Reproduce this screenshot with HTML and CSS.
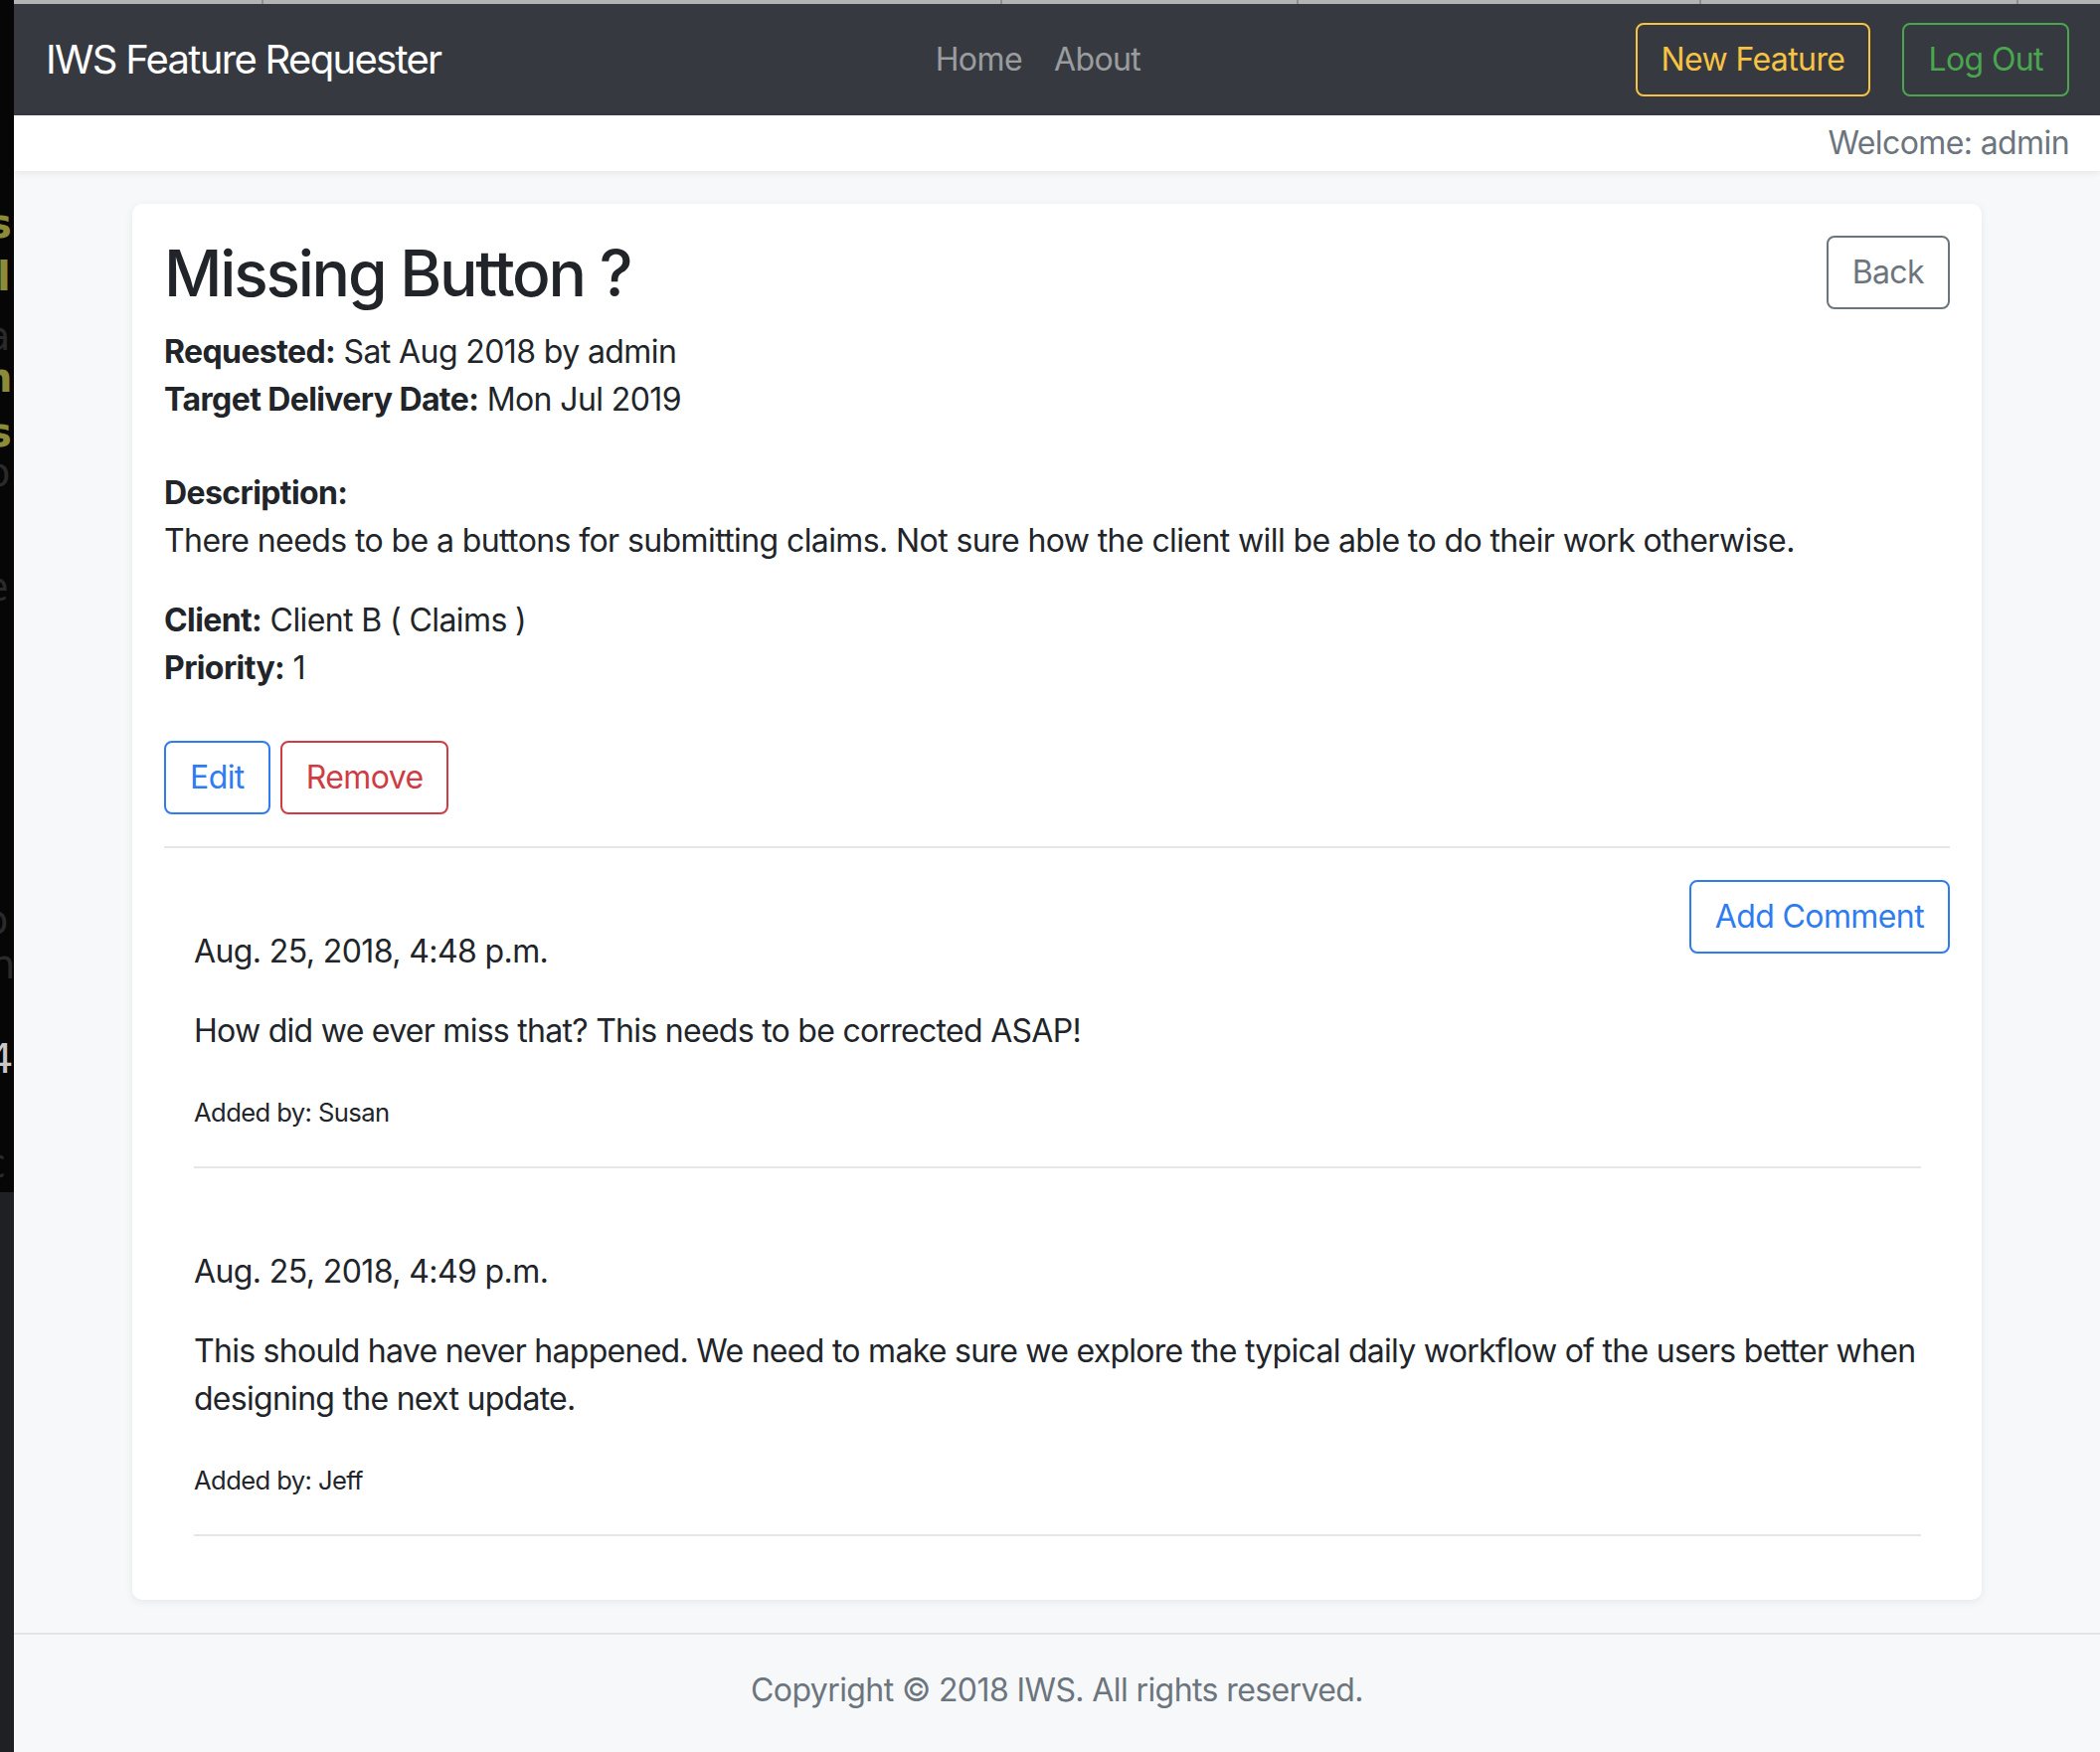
FILE: index.html
```html
<!DOCTYPE html>
<html lang="en">
<head>
<meta charset="utf-8">
<title>IWS Feature Requester</title>
<link rel="stylesheet" href="styles.css">
</head>
<body>
  <div class="side-strip" aria-hidden="true">
    <span class="ghost g1">s</span>
    <span class="ghost g2">l</span>
    <span class="ghost g3">h</span>
    <span class="ghost g4">s</span>
    <span class="ghost dim d1">a</span>
    <span class="ghost dim d2">o</span>
    <span class="ghost dim d3">e</span>
    <span class="ghost dim d4">o</span>
    <span class="ghost dim d5">n</span>
    <span class="ghost light d6">4</span>
    <span class="ghost dim d7">c</span>
  </div>
  <div class="window">
    <div class="tabstrip">
      <span class="tab t1"></span>
      <span class="tab t2"></span>
      <span class="tab t3"></span>
      <span class="tab t4"></span>
      <span class="tab t5"></span>
      <span class="tab t6"></span>
    </div>
    <nav class="navbar">
      <a class="brand" href="#">IWS Feature Requester</a>
      <ul class="nav-links">
        <li><a href="#">Home</a></li>
        <li><a href="#">About</a></li>
      </ul>
      <div class="nav-actions">
        <a class="btn btn-warning" href="#">New Feature</a>
        <a class="btn btn-success" href="#">Log Out</a>
      </div>
    </nav>
    <div class="welcome-bar">Welcome: admin</div>

    <main class="container">
      <section class="card">
        <a class="btn btn-secondary back-btn" href="#">Back</a>
        <h2 class="title">Missing Button ?</h2>
        <p class="meta"><b>Requested:</b> Sat Aug 2018 by admin<br><b>Target Delivery Date:</b> Mon Jul 2019</p>
        <p class="desc"><b>Description:</b><br>There needs to be a buttons for submitting claims. Not sure how the client will be able to do their work otherwise.</p>
        <p class="client"><b>Client:</b> Client B ( Claims )<br><b>Priority:</b> 1</p>
        <div class="actions">
          <a class="btn btn-primary" href="#">Edit</a>
          <a class="btn btn-danger" href="#">Remove</a>
        </div>
        <hr class="divider">
        <a class="btn btn-primary add-comment" href="#">Add Comment</a>
        <div class="comment">
          <p class="comment-date">Aug. 25, 2018, 4:48 p.m.</p>
          <p class="comment-text">How did we ever miss that? This needs to be corrected ASAP!</p>
          <p class="comment-by"><small>Added by: Susan</small></p>
          <hr class="divider">
        </div>
        <div class="comment">
          <p class="comment-date">Aug. 25, 2018, 4:49 p.m.</p>
          <p class="comment-text">This should have never happened. We need to make sure we explore the typical daily workflow of the users better when designing the next update.</p>
          <p class="comment-by"><small>Added by: Jeff</small></p>
          <hr class="divider">
        </div>
      </section>
    </main>

    <footer class="footer">Copyright © 2018 IWS. All rights reserved.</footer>
  </div>
</body>
</html>
```
FILE: styles.css
```css
* { box-sizing: border-box; }

html, body {
  margin: 0;
  padding: 0;
}

body {
  display: flex;
  min-height: 1762px;
  font-family: Inter, "Noto Sans", "Liberation Sans", sans-serif;
  font-size: 32px;
  line-height: 1.5;
  letter-spacing: -0.6px;
  color: #212529;
  background: #f7f8fa;
}

a { text-decoration: none; }

/* ---- left strip (background window peeking out) ---- */
.side-strip {
  position: relative;
  flex: 0 0 14px;
  background: #060606;
  overflow: hidden;
}
.side-strip::after {
  content: "";
  position: absolute;
  left: 0;
  right: 0;
  top: 1199px;
  bottom: 0;
  background: #1f2023;
}
.ghost {
  position: absolute;
  font-family: "DejaVu Sans", sans-serif;
  font-size: 40px;
  line-height: 1;
  letter-spacing: 0;
  color: #8c8b3a;
  font-weight: 700;
}
.ghost.dim { color: #2a2a2a; font-weight: 400; }
.ghost.light { color: #c8c8c8; font-weight: 400; }
.g1 { top: 205px; left: -12px; }
.g2 { top: 258px; left: -3px; }
.g3 { top: 360px; left: -16px; }
.g4 { top: 415px; left: -12px; }
.d1 { top: 318px; left: -14px; }
.d2 { top: 455px; left: -14px; }
.d3 { top: 570px; left: -16px; }
.d4 { top: 905px; left: -16px; }
.d5 { top: 950px; left: -10px; }
.d6 { top: 1045px; left: -12px; }
.d7 { top: 1150px; left: -16px; }

/* ---- main window ---- */
.window {
  flex: 1;
  display: flex;
  flex-direction: column;
  min-width: 0;
}

.tabstrip {
  display: flex;
  height: 4px;
  background: #b4b4b4;
}
.tab { height: 4px; border-right: 2px solid #8e8e8e; }
.t1 { width: 251px; }
.t2 { width: 743px; }
.t3 { width: 298px; }
.t4 { width: 405px; }
.t5 { width: 319px; }
.t6 { flex: 1; border-right: 0; }

.navbar {
  display: flex;
  align-items: center;
  height: 112px;
  padding: 0 31px 0 32px;
  background: #363a40;
}
.brand {
  color: #ffffff;
  font-size: 40px;
  line-height: 1.5;
  letter-spacing: -1.7px;
}
.nav-links {
  display: flex;
  list-style: none;
  margin: 0 auto;
  padding: 0;
}
.nav-links a {
  display: block;
  padding: 0 16px;
  color: rgba(255, 255, 255, 0.5);
}
.nav-actions {
  display: flex;
  gap: 32px;
}

/* ---- buttons ---- */
.btn {
  display: inline-block;
  padding: 11px 24px;
  border: 2px solid currentColor;
  border-radius: 8px;
  font-size: 32px;
  line-height: 48px;
  background: transparent;
}
.btn-warning { color: #f6c343; border-color: #f6c343; }
.btn-success { color: #4aa54f; border-color: #4aa54f; }
.btn-secondary { color: #6c757d; border-color: #6c757d; }
.btn-primary { color: #2f7bf0; border-color: #2f7bf0; }
.btn-danger { color: #cf3c44; border-color: #cf3c44; }

.welcome-bar {
  height: 56px;
  padding: 4px 31px 0 0;
  text-align: right;
  color: #6c757d;
  background: #ffffff;
  box-shadow: 0 3px 6px rgba(0, 0, 0, 0.06);
  position: relative;
  z-index: 1;
}

/* ---- content ---- */
.container {
  width: 1860px;
  margin: 33px auto 0;
}

.card {
  background: #ffffff;
  border-radius: 10px;
  padding: 32px;
  box-shadow: 0 2px 8px rgba(0, 0, 0, 0.07);
}

.back-btn { float: right; }

.title {
  margin: 0 0 16px;
  font-size: 64px;
  font-weight: 500;
  line-height: 1.2;
  letter-spacing: -2.2px;
}

.meta, .desc, .client { margin: 0; }
.meta { margin-bottom: 46px; }
.desc { margin-bottom: 32px; }
.client { margin-bottom: 49px; }

b { font-weight: 700; }

.actions {
  display: flex;
  gap: 10px;
}

.divider {
  margin: 32px 0;
  border: 0;
  border-top: 2px solid #e6e6e6;
}

.add-comment { float: right; }

.comment {
  padding: 48px 29px 0 30px;
}
.comment p { margin: 0 0 32px; }
.comment .comment-text { letter-spacing: -0.72px; }
.comment small { font-size: 25.6px; }

.footer {
  flex: 1;
  margin-top: 33px;
  padding-top: 32px;
  border-top: 2px solid #e2e4e7;
  text-align: center;
  color: #6c757d;
  background: #f7f8fa;
}
```
